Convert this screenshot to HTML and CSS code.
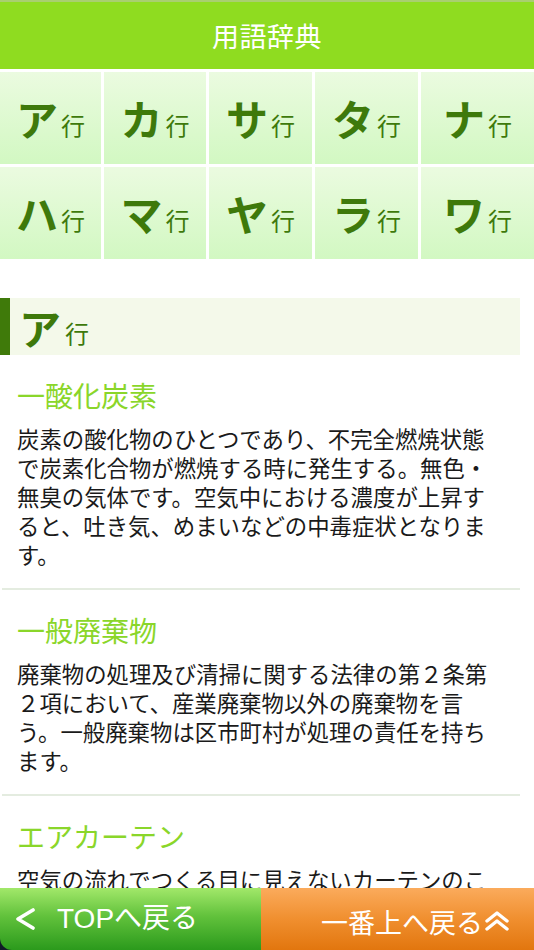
FILE: index.html
```html
<!DOCTYPE html>
<html lang="ja">
<head>
<meta charset="utf-8">
<title>用語辞典</title>
<link rel="stylesheet" href="styles.css">
</head>
<body>
<header class="topbar"><h1 class="topbar-title">用語辞典</h1></header>

<nav class="kana-grid">
  <a class="kana-cell"><span class="kana">ア</span><span class="gyo">行</span></a>
  <a class="kana-cell"><span class="kana">カ</span><span class="gyo">行</span></a>
  <a class="kana-cell"><span class="kana">サ</span><span class="gyo">行</span></a>
  <a class="kana-cell"><span class="kana">タ</span><span class="gyo">行</span></a>
  <a class="kana-cell"><span class="kana">ナ</span><span class="gyo">行</span></a>
  <a class="kana-cell"><span class="kana">ハ</span><span class="gyo">行</span></a>
  <a class="kana-cell"><span class="kana">マ</span><span class="gyo">行</span></a>
  <a class="kana-cell"><span class="kana">ヤ</span><span class="gyo">行</span></a>
  <a class="kana-cell"><span class="kana">ラ</span><span class="gyo">行</span></a>
  <a class="kana-cell"><span class="kana">ワ</span><span class="gyo">行</span></a>
</nav>

<h2 class="section-head"><span class="kana">ア</span><span class="gyo">行</span></h2>

<article class="entry">
  <h3 class="entry-title">一酸化炭素</h3>
  <p class="entry-text">炭素の酸化物のひとつであり、不完全燃焼状態で炭素化合物が燃焼する時に発生する。無色・無臭の気体です。空気中における濃度が上昇すると、吐き気、めまいなどの中毒症状となります。</p>
</article>
<article class="entry">
  <h3 class="entry-title">一般廃棄物</h3>
  <p class="entry-text">廃棄物の処理及び清掃に関する法律の第２条第２項において、産業廃棄物以外の廃棄物を言う。一般廃棄物は区市町村が処理の責任を持ちます。</p>
</article>
<article class="entry">
  <h3 class="entry-title">エアカーテン</h3>
  <p class="entry-text">空気の流れでつくる目に見えないカーテンのことで、建物の出入口などで外気の侵入を防ぎます。</p>
</article>

<footer class="footer">
  <a class="foot-btn foot-back">
    <svg class="chev-left" width="24" height="26" viewBox="0 0 24 26"><polyline points="20,4 5,13 20,22" fill="none" stroke="#fff" stroke-width="3.6" stroke-linecap="round" stroke-linejoin="round"/></svg>
    <span class="foot-label">TOPへ戻る</span>
  </a>
  <a class="foot-btn foot-up">
    <span class="foot-label">一番上へ戻る</span>
    <svg class="chev-up" width="28" height="22" viewBox="0 0 28 22"><polyline points="4,11 14,3 24,11" fill="none" stroke="#fff" stroke-width="3.4" stroke-linecap="round" stroke-linejoin="round"/><polyline points="4,19 14,11 24,19" fill="none" stroke="#fff" stroke-width="3.4" stroke-linecap="round" stroke-linejoin="round"/></svg>
  </a>
</footer>
</body>
</html>
```
FILE: styles.css
```css
* { box-sizing: border-box; }
html, body { margin: 0; padding: 0; }
body {
  width: 534px;
  background: #fff;
  font-family: "Noto Sans CJK JP", "Noto Sans", sans-serif;
  color: #1a1a1a;
  overflow-x: hidden;
  padding-bottom: 70px;
}

.topbar {
  height: 69px;
  background: #8fdc20;
  border-top: 2px solid #a9cf70;
  display: flex;
  align-items: center;
  justify-content: center;
}
.topbar-title {
  margin: 0;
  font-size: 27px;
  font-weight: 400;
  color: #fff;
  line-height: 1;
  letter-spacing: 0.5px;
}

.kana-grid {
  margin-top: 3px;
  display: grid;
  grid-template-columns: 101px 102px 103px 103px 1fr;
  grid-auto-rows: 92px;
  gap: 3px;
}
.kana-cell {
  display: flex;
  align-items: center;
  justify-content: center;
  gap: 3px;
  background: linear-gradient(#ebfbe0, #d2f8c2);
  color: #3e790b;
  text-decoration: none;
}
.kana {
  font-size: 42px;
  font-weight: 700;
  line-height: 1;
  color: #3e790b;
}
.gyo {
  font-size: 24px;
  font-weight: 400;
  line-height: 1;
  color: #3e790b;
  align-self: flex-end;
  margin-bottom: 27px;
}

.section-head {
  margin: 39px 14px 0 0;
  height: 57px;
  background: #f4f9ea;
  border-left: 10px solid #3f7a0a;
  display: flex;
  align-items: center;
  gap: 4px;
  padding-left: 9px;
  font-weight: 400;
}
.section-head .gyo { align-self: center; margin: 12px 0 0; }

.entry {
  margin: 0 14px 0 2px;
  padding: 22px 18px 19px 15px;
  border-bottom: 2px solid #e4ece0;
}
.entry-title {
  margin: 0 0 11px;
  font-size: 28px;
  font-weight: 400;
  line-height: 36px;
  color: #8ad62a;
}
.entry-text {
  margin: 0;
  font-size: 22.4px;
  line-height: 29px;
  color: #1a1a1a;
}

.footer {
  position: fixed;
  left: 0;
  bottom: 0;
  width: 534px;
  height: 62px;
  display: flex;
  background: #111b28;
}
.foot-btn {
  display: flex;
  align-items: center;
  color: #fff;
  text-decoration: none;
}
.foot-back {
  width: 261px;
  padding-left: 13px;
  gap: 20px;
  background: linear-gradient(#a2e86a, #62c23c 45%, #2b9a1c);
  border-bottom-left-radius: 12px;
}
.foot-up {
  flex: 1;
  justify-content: flex-end;
  padding-right: 23px;
  padding-top: 4px;
  background: linear-gradient(#fbab5c, #f08f2f 50%, #e2760e);
}
.foot-label {
  font-family: "Liberation Sans", "Noto Sans CJK JP", sans-serif;
  font-size: 28px;
  line-height: 1;
  color: #fff;
}
.foot-up .foot-label { font-size: 27px; font-family: "Noto Sans CJK JP", sans-serif; }
.chev-left, .chev-up { display: block; filter: blur(0.4px); }
```
